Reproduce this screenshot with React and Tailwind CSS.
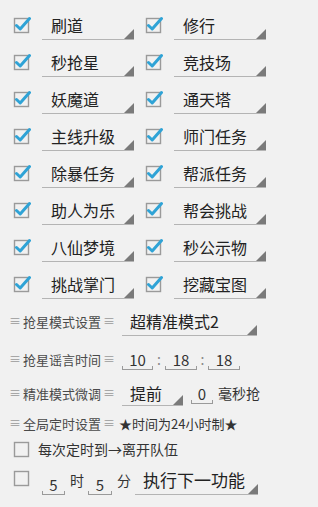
import React from 'react';

const font = { fontFamily: '"Noto Sans CJK SC", "Noto Sans", sans-serif' };

function Check({ on }) {
  return (
    <svg width="18" height="18" viewBox="0 0 18 18" className="shrink-0">
      <rect x="1.5" y="2.5" width="14" height="14" fill="none" stroke="#9a9a9a" strokeWidth="1.4" />
      {on && (
        <path d="M3.5 9.5 L7.2 13 L16.5 2.5" fill="none" stroke="#2fa3d6" strokeWidth="3" strokeLinecap="round" strokeLinejoin="round" />
      )}
    </svg>
  );
}

function Spinner({ text, w, h = 'h-[30px]', size = 'text-[16px]', pl = 'pl-[9px]' }) {
  return (
    <div className={`relative ${w} ${h} flex items-center ${pl} border-b border-[#b4b4b4] ${size} text-[#222]`}>
      <span className="leading-none">{text}</span>
      <div className="absolute right-0 bottom-0 w-0 h-0 border-l-[10px] border-l-transparent border-b-[10px] border-b-[#7a7a7a]" />
    </div>
  );
}

function Field({ text, w }) {
  return (
    <div className={`relative ${w} h-[22px] flex items-center justify-center text-[15px] text-[#333]`}>
      <span className="leading-none">{text}</span>
      <div className="absolute left-0 right-0 bottom-0 h-[4px] border-b border-l border-r border-[#9a9a9a]" />
    </div>
  );
}

function Label({ text }) {
  return (
    <div className="flex items-center text-[13px] text-[#4a4a4a] leading-none">
      <span className="text-[#9a9a9a] text-[12px] mr-[2px]">≡</span>
      <span>{text}</span>
      <span className="text-[#9a9a9a] text-[12px] ml-[2px]">≡</span>
    </div>
  );
}

const rows = [
  ['刷道', '修行'],
  ['秒抢星', '竞技场'],
  ['妖魔道', '通天塔'],
  ['主线升级', '师门任务'],
  ['除暴任务', '帮派任务'],
  ['助人为乐', '帮会挑战'],
  ['八仙梦境', '秒公示物'],
  ['挑战掌门', '挖藏宝图'],
];

export default function App() {
  return (
    <div className="w-[318px] h-[507px] bg-[#f1f1f1] overflow-hidden" style={font}>
      <div className="flex flex-col gap-[7px] pt-[10px]">
        {rows.map(([a, b]) => (
          <div key={a} className="flex items-center h-[30px] pl-[13px]">
            <Check on />
            <div className="w-[11px]" />
            <Spinner text={a} w="w-[92px]" />
            <div className="w-[11px]" />
            <Check on />
            <div className="w-[11px]" />
            <Spinner text={b} w="w-[92px]" />
          </div>
        ))}
      </div>

      <div className="flex items-center h-[30px] mt-[7px] pl-[9px]">
        <div className="w-[113px]">
          <Label text="抢星模式设置" />
        </div>
        <Spinner text="超精准模式2" w="w-[135px]" pl="pl-[8px]" />
      </div>

      <div className="flex items-end h-[22px] mt-[12px] pl-[9px]">
        <div className="w-[113px] self-center">
          <Label text="抢星谣言时间" />
        </div>
        <Field text="10" w="w-[31px]" />
        <span className="w-[12px] text-center text-[#888] text-[14px] self-center">:</span>
        <Field text="18" w="w-[32px]" />
        <span className="w-[11px] text-center text-[#888] text-[14px] self-center">:</span>
        <Field text="18" w="w-[32px]" />
      </div>

      <div className="flex items-center h-[26px] mt-[10px] pl-[9px]">
        <div className="w-[113px]">
          <Label text="精准模式微调" />
        </div>
        <Spinner text="提前" w="w-[61px]" h="h-[26px]" pl="pl-[8px]" />
        <div className="w-[8px]" />
        <Field text="0" w="w-[22px]" />
        <span className="ml-[5px] text-[14px] text-[#333] leading-none">毫秒抢</span>
      </div>

      <div className="flex items-center h-[18px] mt-[8px] pl-[9px] text-[13px] text-[#333]">
        <Label text="全局定时设置" />
        <span className="ml-[4px] leading-none">★时间为24小时制★</span>
      </div>

      <div className="flex items-center h-[20px] mt-[7px] pl-[13px]">
        <Check />
        <span className="ml-[7px] text-[14px] text-[#333] leading-none">每次定时到→离开队伍</span>
      </div>

      <div className="flex items-end h-[30px] mt-[6px] pl-[13px]">
        <div className="self-center mt-[-4px]">
          <Check />
        </div>
        <div className="w-[11px]" />
        <Field text="5" w="w-[23px]" />
        <span className="ml-[5px] w-[18px] text-[14px] text-[#333] self-center">时</span>
        <Field text="5" w="w-[24px]" />
        <span className="ml-[5px] w-[18px] text-[14px] text-[#333] self-center">分</span>
        <Spinner text="执行下一功能" w="w-[123px]" size="text-[17px]" pl="pl-[8px]" />
      </div>
    </div>
  );
}
